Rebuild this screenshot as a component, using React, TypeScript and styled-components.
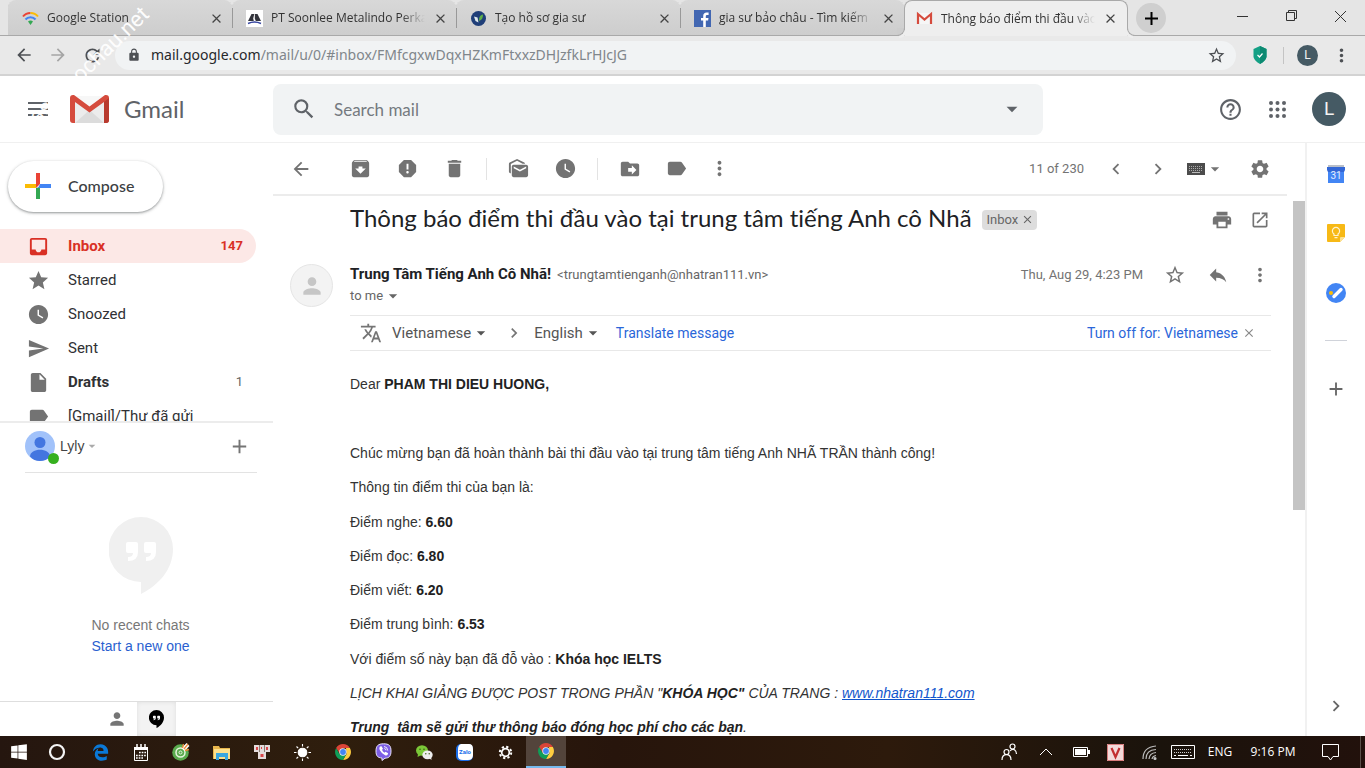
import React from "react";
import styled, { createGlobalStyle, css } from "styled-components";
import {
  MdAdd, MdArchive, MdArrowBack, MdArrowDropDown, MdArrowForward, MdChevronLeft, MdChevronRight,
  MdClose, MdDelete, MdDriveFileMove, MdHelpOutline, MdInbox, MdInsertDriveFile, MdLabel,
  MdLock, MdMarkAsUnread, MdMoreVert, MdOpenInNew, MdPerson, MdPrint, MdRefresh, MdReply, MdReport,
  MdSearch, MdSend, MdSettings, MdStar, MdStarBorder, MdTranslate, MdWatchLater,
} from "react-icons/md";
import { FaEdgeLegacy, FaWindows } from "react-icons/fa6";

const ui = `"Open Sans", "Noto Sans", sans-serif`;
const roboto = `Roboto, "Noto Sans", sans-serif`;
const arial = `"Liberation Sans", Arial, sans-serif`;
const product = `Lato, "Open Sans", sans-serif`;

const GlobalStyle = createGlobalStyle`
  *, *::before, *::after { box-sizing: border-box; }
  body { margin: 0; background: #fff; font-family: ${roboto}; color: #202124; }
  button { border: 0; padding: 0; margin: 0; background: none; color: inherit; font: inherit; cursor: pointer; }
  a { text-decoration: none; }
  p, h1, ul { margin: 0; padding: 0; }
  ul { list-style: none; }
  svg { display: block; flex: none; }
`;

const Screen = styled.div`
  position: relative;
  display: flex;
  flex-direction: column;
  height: 100vh;
  overflow: hidden;
`;

/* ---------- browser ---------- */

const TabStrip = styled.div`
  display: flex;
  flex: none;
  height: 36px;
  padding-left: 8px;
  background: #e5e5e5;
  box-shadow: inset 0 -1px 0 #a9a9a9;
`;

const Tab = styled.div<{ $active?: boolean }>`
  position: relative;
  display: flex;
  flex: 0 1 224px;
  min-width: 0;
  align-items: center;
  gap: 8px;
  padding: 0 8px 0 14px;
  border-radius: 8px 8px 0 0;
  font: 12px/36px ${ui};
  color: #333;
  background: linear-gradient(#d8d8d8, #cdcdcd);
  box-shadow: inset 0 -1px 0 #a9a9a9;
  & + &::before {
    content: "";
    position: absolute;
    left: 0;
    top: 8px;
    width: 1px;
    height: 20px;
    background: #999;
  }
  ${(p) => p.$active && css`
    z-index: 1;
    padding: 0 9px 0 11px;
    background: #eeeeee;
    border: 1px solid #a9a9a9;
    border-bottom: 0;
    box-shadow: none;
    && + &&::before, &&::before, &&::after {
      content: "";
      position: absolute;
      top: auto;
      bottom: 0;
      width: 8px;
      height: 8px;
    }
    &&::before {
      left: -8px;
      background: #cdcdcd;
      border: solid #a9a9a9;
      border-width: 0 1px 1px 0;
      border-radius: 0 0 8px 0;
      box-shadow: 2px 2px 0 #eee;
    }
    &&::after {
      right: -8px;
      background: #e5e5e5;
      border: solid #a9a9a9;
      border-width: 0 0 1px 1px;
      border-radius: 0 0 0 8px;
      box-shadow: -2px 2px 0 #eee;
    }
  `}
`;

const TabTitle = styled.span`
  flex: 1;
  min-width: 0;
  overflow: hidden;
  white-space: nowrap;
  mask-image: linear-gradient(90deg, #000 calc(100% - 24px), transparent);
`;

const TabClose = styled.button`
  display: flex;
  color: #444;
`;

const NewTab = styled.button`
  display: flex;
  align-items: center;
  justify-content: center;
  width: 30px;
  height: 30px;
  margin: 3px 0 0 8px;
  border-radius: 50%;
  background: #cfcfcf;
  color: #000;
`;

const WindowControls = styled.div`
  display: flex;
  margin-left: auto;
`;

const WindowButton = styled.button`
  display: flex;
  align-items: center;
  justify-content: center;
  width: 49px;
  height: 32px;
  color: #333;
`;

const AddressBar = styled.div`
  display: flex;
  flex: none;
  align-items: center;
  height: 40px;
  padding: 0 7px;
  background: #e9e9e9;
  border-bottom: 2px solid #d3d3d3;
`;

const NavButton = styled.button<{ $dim?: boolean }>`
  display: flex;
  align-items: center;
  justify-content: center;
  width: 34px;
  height: 30px;
  color: ${(p) => (p.$dim ? "#a5a5a5" : "#4d5054")};
`;

const Omnibox = styled.div`
  display: flex;
  flex: 1;
  align-items: center;
  height: 29px;
  margin-left: 6px;
  padding: 0 10px 0 12px;
  border-radius: 15px;
  background: #f1f3f4;
  color: #4d5054;
`;

const Url = styled.div`
  flex: 1;
  padding-left: 10px;
  font: 14px/20px "Noto Sans", sans-serif;
  color: #80868b;
  b { font-weight: 400; color: #26282b; }
`;

const Shield = styled.span`
  display: flex;
  padding: 0 16px 0 17px;
`;

const ProfileArea = styled.div`
  display: flex;
  margin-right: 6px;
  padding: 0 0 0 13px;
  align-items: center;
`;

const BarDivider = styled.span`
  width: 1px;
  height: 17px;
  background: #c4c4c4;
`;

const Avatar = styled.button<{ $size: number }>`
  width: ${(p) => p.$size}px;
  height: ${(p) => p.$size}px;
  border-radius: 50%;
  background: #455a64;
  color: #f3f3f3;
  text-align: center;
  font: ${(p) => (p.$size > 30 ? 19 : 12)}px/${(p) => p.$size}px ${roboto};
`;

/* ---------- gmail header ---------- */

const Header = styled.header`
  display: flex;
  flex: none;
  align-items: center;
  height: 67px;
  padding: 0 19px 0 28px;
  border-bottom: 1px solid #f0f0f0;
  color: #5f6368;
`;

const Brand = styled.a`
  display: flex;
  align-items: center;
  gap: 15px;
  width: 203px;
  margin-left: 22px;
  font: 24px/32px ${product};
  color: #5f6368;
`;

const SearchForm = styled.form`
  display: flex;
  align-items: center;
  flex: 0 1 770px;
  height: 51px;
  padding: 0 18px;
  border-radius: 8px;
  background: #f1f3f4;
`;

const SearchInput = styled.input`
  flex: 1;
  min-width: 0;
  padding: 2px 0 0 17px;
  border: 0;
  outline: 0;
  background: none;
  font: 17px/24px ${product};
  color: #5f6368;
  &::placeholder { color: #757a7f; opacity: 1; }
`;

const HeaderActions = styled.div`
  display: flex;
  align-items: center;
  gap: 26px;
  margin-left: auto;
`;

const IconButton = styled.button`
  display: flex;
  align-items: center;
  justify-content: center;
  color: inherit;
`;

/* ---------- layout ---------- */

const Body = styled.div`
  display: flex;
  flex: 1;
  min-height: 0;
`;

const Sidebar = styled.aside`
  display: flex;
  flex: 0 0 273px;
  flex-direction: column;
`;

const Compose = styled.button`
  display: flex;
  flex: none;
  align-items: center;
  align-self: flex-start;
  gap: 16px;
  width: 155px;
  height: 51px;
  margin: 18px 0 17px 8px;
  padding: 0 0 2px 16px;
  border-radius: 26px;
  background: #fff;
  box-shadow: 0 1px 2px rgba(60, 64, 67, 0.4), 0 1px 3px 1px rgba(60, 64, 67, 0.15);
  font: 500 16px/20px ${product};
  color: #3c4043;
`;

const Folders = styled.nav`
  flex: 1;
  min-height: 0;
  overflow: hidden;
`;

const Folder = styled.a<{ $active?: boolean; $bold?: boolean }>`
  display: flex;
  align-items: center;
  height: 34px;
  margin-right: 17px;
  padding: 0 13px 0 27px;
  border-radius: 0 17px 17px 0;
  font: ${(p) => (p.$active || p.$bold ? 700 : 400)} 15px/20px ${roboto};
  color: ${(p) => (p.$active ? "#d93025" : "#303134")};
  background: ${(p) => (p.$active ? "#fce8e6" : "none")};
  svg { color: ${(p) => (p.$active ? "#d93025" : "#737373")}; }
  span { flex: 1; padding-left: 18px; }
  small { font-size: 13px; color: ${(p) => (p.$active ? "#d93025" : "#666")}; font-weight: ${(p) => (p.$active ? 700 : 400)}; }
`;

const Chats = styled.section`
  display: flex;
  flex: none;
  flex-direction: column;
  border-top: 2px solid #ececec;
  font: 14px/20px ${arial};
`;

const ChatUser = styled.div`
  display: flex;
  align-items: center;
  height: 50px;
  margin: 0 16px 0 25px;
  padding: 0 6px 3px 0;
  border-bottom: 1px solid #e3e3e3;
  color: #444;
  > button:last-child { color: #757575; }
`;

const ChatAvatar = styled.span`
  position: relative;
  margin-right: 5px;
  &::after {
    content: "";
    position: absolute;
    right: -4px;
    bottom: -3px;
    width: 11px;
    height: 11px;
    border-radius: 50%;
    background: #36b01f;
  }
`;

const ChatUserName = styled.button`
  display: flex;
  align-items: center;
  margin-right: auto;
  svg { color: #aaa; }
`;

const ChatEmpty = styled.div`
  display: flex;
  flex-direction: column;
  align-items: center;
  padding: 44px 0 44px 8px;
  color: #777;
  line-height: 21px;
  svg { margin-bottom: 20px; }
  a { color: #2a5fd0; }
`;

const ChatTabs = styled.div`
  display: flex;
  justify-content: center;
  height: 35px;
  border-top: 1px solid #dedede;
`;

const ChatTab = styled.button<{ $active?: boolean }>`
  display: flex;
  align-items: center;
  justify-content: center;
  width: 39px;
  color: #757575;
  background: ${(p) => (p.$active ? "#f3f3f3" : "none")};
  box-shadow: ${(p) => (p.$active ? "inset 0 0 4px #ddd" : "none")};
`;

const Main = styled.main`
  display: flex;
  flex: 1;
  flex-direction: column;
  min-width: 0;
`;

const Toolbar = styled.div`
  display: flex;
  flex: none;
  align-items: center;
  height: 53px;
  margin-right: 18px;
  padding-left: 4px;
  border-bottom: 2px solid #ececec;
  color: #737373;
`;

const ToolButton = styled.button<{ $w?: number; $gap?: number }>`
  display: flex;
  align-items: center;
  justify-content: center;
  width: ${(p) => p.$w ?? 47}px;
  height: 34px;
  margin-right: ${(p) => p.$gap ?? 0}px;
`;

const ToolDivider = styled.span`
  width: 1px;
  height: 22px;
  margin: 0 8px;
  background: #e3e3e3;
`;

const Position = styled.span`
  margin-left: auto;
  padding-right: 11px;
  font: 13px/20px ${roboto};
`;

const Scroller = styled.div`
  display: flex;
  flex: 1;
  min-height: 0;
  overflow: hidden;
`;

const Thread = styled.article`
  flex: 1;
  min-width: 0;
  padding: 8px 22px 0 17px;
`;

const ScrollTrack = styled.div`
  width: 12px;
  padding-top: 5px;
`;

const ScrollThumb = styled.div`
  height: 309px;
  background: #c4c4c4;
`;

const SubjectRow = styled.div`
  display: flex;
  align-items: center;
  height: 31px;
  padding-left: 60px;
  color: #5f6368;
`;

const Subject = styled.h1`
  padding-bottom: 3px;
  font: 400 24px/28px ${product};
  font-variant-ligatures: none;
  color: #202124;
  white-space: nowrap;
`;

const Chip = styled.span`
  display: flex;
  align-items: center;
  gap: 3px;
  height: 20px;
  margin-left: 10px;
  padding: 0 3px 0 5px;
  border-radius: 4px;
  background: #ddd;
  font: 13px/20px ${roboto};
  color: #666;
`;

const RowActions = styled.div`
  display: flex;
  align-items: center;
  margin-left: auto;
  color: #737373;
`;

const Sender = styled.header`
  display: flex;
  margin-top: 29px;
  height: 51px;
`;

const SenderPhoto = styled.span`
  display: flex;
  align-items: center;
  justify-content: center;
  width: 43px;
  height: 43px;
  margin-right: 17px;
  border: 1px solid #e5e5e5;
  border-radius: 50%;
  background: #f3f3f3;
  color: #c6c6c6;
`;

const SenderInfo = styled.div`
  flex: 1;
  min-width: 0;
`;

const SenderLine = styled.div`
  display: flex;
  align-items: center;
  height: 21px;
  font: 13px/21px ${roboto};
  color: #666;
  white-space: nowrap;
  strong { margin-right: 6px; font-size: 15px; color: #202124; }
  time { margin-right: 10px; }
`;

const ToMe = styled.button`
  display: flex;
  align-items: center;
  height: 22px;
  font: 13px/22px ${roboto};
  color: #666;
`;

const TranslateBar = styled.div`
  display: flex;
  align-items: center;
  height: 36px;
  margin-left: 60px;
  padding: 0 15px 0 10px;
  border: solid #e8e8e8;
  border-width: 1px 0;
  font: 14px/20px ${roboto};
  color: #555;
  > svg { color: #757575; }
  > button:last-child { color: #888; }
`;

const Language = styled.button`
  display: flex;
  align-items: center;
  margin: 0 13px 0 10px;
  font-size: 15px;
`;

const BlueLink = styled.a<{ $push?: boolean }>`
  margin-left: ${(p) => (p.$push ? "auto" : "0")};
  margin-right: 4px;
  color: #2a66d9;
`;

const Message = styled.div`
  display: flex;
  flex-direction: column;
  gap: 1px;
  padding: 16px 0 0 60px;
  font: 14px/34px ${arial};
  color: #333;
  white-space: nowrap;
  strong { color: #222; }
  a { color: #1155cc; text-decoration: underline; }
`;

const Passage = styled.div`
  p { min-height: 34px; }
`;

const SidePanel = styled.aside`
  display: flex;
  flex: 0 0 60px;
  flex-direction: column;
  align-items: center;
  gap: 37px;
  padding-top: 22px;
  border-left: 2px solid #f1f1f1;
  color: #666;
  hr { width: 22px; margin: 0; border: 0; border-top: 1px solid #d0d3da; }
`;

const PanelApps = styled.div`
  display: flex;
  flex-direction: column;
  align-items: center;
  gap: 41px;
`;

const PanelToggle = styled.button`
  display: flex;
  margin-top: auto;
  margin-bottom: 19px;
`;

/* ---------- task bar ---------- */

const Taskbar = styled.footer`
  display: flex;
  flex: none;
  height: 32px;
  background: linear-gradient(90deg, #25160f, #2f1e0d 25%, #27150c 45%, #2d1a0c 65%, #1a130c 85%, #22110c);
  color: #fff;
`;

const StartButtons = styled.div`
  display: flex;
  width: 80px;
`;

const Apps = styled.div`
  display: grid;
  grid-template-columns: repeat(12, 1fr);
  width: 486px;
`;

const TaskButton = styled.button<{ $active?: boolean }>`
  display: flex;
  align-items: center;
  justify-content: center;
  min-width: 38px;
  background: ${(p) => (p.$active ? "#53443b" : "none")};
  border-bottom: ${(p) => (p.$active ? "2px solid #76b9ed" : "0")};
`;

const Tray = styled.div`
  display: flex;
  align-items: center;
  margin-left: auto;
  border-right: 1px solid #5a4f49;
  margin-right: 4px;
  font: 12px/32px ${ui};
`;

const TrayItem = styled.button<{ $w: number }>`
  display: flex;
  align-items: center;
  justify-content: center;
  width: ${(p) => p.$w}px;
  height: 32px;
`;

const Watermark = styled.span`
  position: absolute;
  left: 20px;
  top: 120px;
  z-index: 5;
  transform: rotate(-44deg);
  transform-origin: left center;
  font: 22px/24px ${roboto};
  color: rgba(255, 255, 255, 0.95);
  pointer-events: none;
`;

/* ---------- drawings ---------- */

const StationIcon = () => (
  <svg width="17" height="17" viewBox="0 0 17 17" fill="none" strokeWidth="2">
    <path d="M1 6.500C3 4 6 3 8.500 3" stroke="#ea4335" />
    <path d="M8.500 3C11 3 14 4 16 6.500" stroke="#fbbc04" />
    <path d="M3.500 9.500C6 6.500 11 6.500 13.500 9.500" stroke="#4285f4" />
    <path d="M6 11.500C7.500 10.200 9.500 10.200 11 11.500L8.500 15z" fill="#34a853" />
  </svg>
);

const SoonleeIcon = () => (
  <svg width="17" height="17" viewBox="0 0 17 17">
    <path fill="#fff" d="M0 0h17v17H0z" />
    <path fill="#33343c" d="M5.500 4h2.800L7.200 8.500l.6 2.500H2zM8.900 4h2.600L15 11H9.800L8.800 8.500z" />
    <path d="M2 13.500Q8.500 10.500 15 13.500" fill="none" stroke="#3746a0" strokeWidth="1.500" />
  </svg>
);

const TutorIcon = () => (
  <svg width="17" height="17" viewBox="0 0 17 17">
    <circle cx="8.500" cy="8.500" r="7.500" fill="#1f3e78" />
    <path fill="#dfe9ee" d="M4 6.500l3.500 1 1 5-3-1.500z" />
    <path fill="#60b048" d="M9 11c0-4 1-6 4-6.500C13 8 12 10 9 11z" />
  </svg>
);

const FacebookIcon = () => (
  <svg width="17" height="17" viewBox="0 0 17 17">
    <path fill="#4267b2" d="M0 0h17v17H0z" />
    <path fill="#fff" d="M9.200 17v-6.500H7V8h2.200V6c0-2.300 1.300-3.600 3.500-3.600.900 0 1.700.1 1.900.1V5h-1.400c-1.100 0-1.400.6-1.400 1.400V8h2.700l-.4 2.500h-2.300V17z" />
  </svg>
);

const MailTabIcon = () => (
  <svg width="17" height="17" viewBox="0 0 17 17">
    <path fill="#f6f6f6" d="M1 3h15v11H1z" />
    <path d="M2 14V4l6.500 5.500L15 4v10" fill="none" stroke="#d54b3d" strokeWidth="2.200" />
  </svg>
);

const GmailLogo = () => (
  <svg width="39" height="28" viewBox="0 0 39 28">
    <path fill="#ececec" d="M2 1h35v27H2z" />
    <path fill="#dcdcdc" d="M5 28L19.500 15 34 28z" />
    <path fill="#f7f7f7" d="M5 1h29L19.500 12z" />
    <path fill="#d54b3d" d="M0 3Q0 0 3 0h1l15.500 11.500L35 0h1q3 0 3 3v22q0 3-3 3h-2V7L19.500 17.500 5 7v21H3q-3 0-3-3z" />
    <path fill="#b83a2e" d="M34 7l5-4v22q0 3-3 3h-2z" />
  </svg>
);

const MenuIcon = () => (
  <svg width="20" height="14" viewBox="0 0 20 14" fill="#5f6368">
    <path d="M0 0h20v2H0zM0 6h20v2H0zM0 12h20v2H0z" />
  </svg>
);

const GridDots = () => (
  <svg width="17" height="17" viewBox="0 0 17 17" fill="currentColor">
    {[2, 8.5, 15].map((y) => [2, 8.5, 15].map((x) => <circle key={`${x}-${y}`} cx={x} cy={y} r="2" />))}
  </svg>
);

const InputToolsIcon = () => (
  <svg width="18" height="12" viewBox="0 0 18 12">
    <path fill="#4c4c4c" d="M0 0h18v12H0z" />
    <path d="M2 3.500h14M2 5.500h14M2 7.500h14" stroke="#aaa" strokeDasharray="1 1" />
    <path d="M5 9.500h8" stroke="#bbb" />
  </svg>
);

const ComposeIcon = () => (
  <svg width="28" height="28" viewBox="0 0 28 28">
    <path fill="#ea4335" d="M12 1h4v11l-4 4z" />
    <path fill="#fbbc04" d="M1 12h11v4H1z" />
    <path fill="#34a853" d="M12 16l4-1v12h-4z" />
    <path fill="#4285f4" d="M16 12h11v4H14z" />
  </svg>
);

const ShieldIcon = () => (
  <svg width="14" height="18" viewBox="0 0 14 18">
    <path fill="#14a085" d="M7 0l6.500 3v8q-1 4-6.500 7Q1.500 15 .5 11V3z" />
    <path fill="#0d8a72" d="M7 0l6.500 3v8q-1 4-6.500 7z" />
    <path d="M4.500 9l2 2 3-3.500" fill="none" stroke="#fff" strokeWidth="1.200" />
  </svg>
);

const UserIcon = () => (
  <svg width="30" height="30" viewBox="0 0 30 30">
    <circle cx="15" cy="15" r="15" fill="#a1c2fa" />
    <circle cx="15" cy="11.500" r="5.500" fill="#4376e0" />
    <path fill="#4376e0" d="M5 25.500c0-9 20-9 20 0q-4 4.500-10 4.500T5 25.500z" />
  </svg>
);

const HangoutsIcon = ({ size, fill, mark }: { size: number; fill: string; mark: string }) => (
  <svg width={size} height={(size * 78) / 64} viewBox="0 0 64 78">
    <path fill={fill} d="M32 0a32 32 0 0 1 32 32c0 20-14 36-32 45V65A32.500 32.500 0 0 1 32 0z" />
    <path fill={mark} d="M19 25h8q2 0 2 2v8q0 9-10 9v-4q5 0 5-4h-5q-2 0-2-2v-7q0-2 2-2zM37 25h8q2 0 2 2v8q0 9-10 9v-4q5 0 5-4h-5q-2 0-2-2v-7q0-2 2-2z" />
  </svg>
);

const CalendarIcon = () => (
  <svg width="18" height="18" viewBox="0 0 18 18">
    <path fill="#b9bfc9" d="M1 0h16v4H1z" />
    <path fill="#4285f4" d="M0 2h18l-1 3v13H1V5z" />
    <path fill="#3367d6" d="M0 2h18v3l-1 2H1L0 5z" />
    <text x="9" y="14" textAnchor="middle" fontSize="10" fontFamily="Roboto, sans-serif" fill="#e8f0fe">31</text>
  </svg>
);

const KeepIcon = () => (
  <svg width="18" height="18" viewBox="0 0 18 18">
    <path fill="#f7b916" d="M1 0h16q1 0 1 1v12l-5 5H1q-1 0-1-1V1q0-1 1-1z" />
    <path fill="#fde293" d="M13 18v-4q0-1 1-1h4z" />
    <path d="M7 11.500V10a3.600 3.600 0 1 1 4 0v1.500zM7.500 13.700h3" fill="none" stroke="#fff3cf" strokeWidth="1.200" />
  </svg>
);

const TasksIcon = () => (
  <svg width="20" height="20" viewBox="0 0 20 20">
    <circle cx="10" cy="10" r="10" fill="#4285f4" />
    <circle cx="5" cy="10" r="2" fill="#fbbc04" />
    <path d="M8 13.500l7-7" stroke="#fff" strokeWidth="3.400" strokeLinecap="round" />
  </svg>
);

const KeyboardIcon = () => (
  <svg width="24" height="17" viewBox="0 0 24 17" fill="none" stroke="#fff">
    <path d="M.500 1.500h23v13H.500z" />
    <path d="M3 5.500h18M3 8.500h18" strokeDasharray="1 1" opacity=".8" />
    <path d="M3 11.500h2M7 11.500h10M19 11.500h2" />
  </svg>
);

const ChromeIcon = () => (
  <svg width="16" height="16" viewBox="0 0 16 16">
    <path fill="#db4437" d="M1.100 4A8 8 0 0 1 14.900 4H8L5 10z" />
    <path fill="#ffcd40" d="M14.900 4A8 8 0 0 1 8 16l3.500-6L11 4z" />
    <path fill="#0f9d58" d="M1.100 4A8 8 0 0 0 8 16l3.400-6H4.500z" />
    <circle cx="8" cy="8" r="3.700" fill="#f1f1f1" />
    <circle cx="8" cy="8" r="2.900" fill="#4285f4" />
  </svg>
);

const CortanaIcon = () => (
  <svg width="18" height="18" viewBox="0 0 18 18"><circle cx="9" cy="9" r="7" fill="none" stroke="#f4f4f4" strokeWidth="2.200" /></svg>
);

const DatesIcon = () => (
  <svg width="16" height="17" viewBox="0 0 16 17" fill="none" stroke="#fff">
    <path d="M1.500 3.500h13v13h-13z" />
    <path d="M1 4.500h14" strokeWidth="3" />
    <path d="M4 0v4M8 0v4M12 0v4" strokeWidth="1.500" />
    <path d="M6 8.500h7M3 11.500h10M3 14h7" strokeWidth="1.700" strokeDasharray="1.700 1" />
  </svg>
);

const CocCocIcon = () => (
  <svg width="18" height="18" viewBox="0 0 18 18">
    <circle cx="8.500" cy="9.500" r="8.300" fill="#5aab4e" />
    <circle cx="8.500" cy="9.500" r="4.500" fill="none" stroke="#e8f5e0" strokeWidth="1.500" />
    <circle cx="8.500" cy="9.500" r="1.500" fill="none" stroke="#e8f5e0" />
    <path d="M11 6.500L16 1.500" stroke="#fff" strokeWidth="4" />
    <path d="M10.500 5l1-4M12 6l4-5M13 7.500l4-1" stroke="#f08a3c" strokeWidth="1.300" />
  </svg>
);

const FolderIcon = () => (
  <svg width="17" height="15" viewBox="0 0 17 15">
    <path fill="#e8b64c" d="M0 1h6l1 2h10v11H0z" />
    <path fill="#fde08c" d="M1 4h16v10H1z" />
    <path fill="#3aa7e0" d="M3 8h12v7h-3v-3H6v3H3z" />
  </svg>
);

const TilesIcon = () => (
  <svg width="16" height="15" viewBox="0 0 16 15">
    <path fill="#e4dcdc" d="M0 0h5v7H0zM5.500 0h5v7h-5zM11 0h5v7h-5zM4 7h8v7H4z" />
    <path fill="#d9474b" d="M2 2h2v3H2zM7 2h1v2H7zM12 2h2v3h-2zM6.500 9h3v3h-3z" />
  </svg>
);

const SunIcon = () => (
  <svg width="17" height="17" viewBox="0 0 17 17" stroke="#fff" strokeWidth="1.100">
    <circle cx="8.500" cy="8.500" r="4.300" fill="#fff" />
    <path d="M8.500 0v2.500M8.500 14.500V17M0 8.500h2.500M14.500 8.500H17M2.500 2.500l1.700 1.700M12.800 12.800l1.700 1.700M2.500 14.500l1.700-1.700M12.800 4.200l1.700-1.700" />
  </svg>
);

const ViberIcon = () => (
  <svg width="17" height="18" viewBox="0 0 17 18">
    <path fill="#7d5fe6" stroke="#e9e4fb" d="M8.500.8C14 .8 16 2.500 16 8s-2 7-6 7.200L7 17.500v-2.400C2.500 14.500 1 13 1 8S3 .8 8.500.8z" />
    <path fill="#fff" d="M5 3.500l1.500-.3L8 5.800l-1 1q.600 2 2.500 2.900l1-1 2.600 1.600-.5 1.500q-1 1.200-2.500.5Q6.500 10.500 4.700 7 3.800 4.600 5 3.500z" />
    <path d="M9 3.500q3.500.3 3.700 4M9.300 5.500q1.500.2 1.700 1.800" fill="none" stroke="#fff" strokeWidth=".9" />
  </svg>
);

const WeChatIcon = () => (
  <svg width="17" height="15" viewBox="0 0 17 15">
    <ellipse cx="6" cy="5.500" rx="6" ry="5.200" fill="#7bc838" />
    <path fill="#7bc838" d="M2 9l-.5 3 3-1.500z" />
    <ellipse cx="11.500" cy="9.800" rx="5.200" ry="4.400" fill="#eee" />
    <path fill="#eee" d="M13 13l2.500 2-.3-3z" />
    <g fill="#38590f"><circle cx="4" cy="4.300" r=".8" /><circle cx="8" cy="4.300" r=".8" /><circle cx="9.800" cy="8.700" r=".7" /><circle cx="13.200" cy="8.700" r=".7" /></g>
  </svg>
);

const ZaloIcon = () => (
  <svg width="17" height="17" viewBox="0 0 17 17">
    <rect width="17" height="17" rx="5" fill="#1a6dea" />
    <path fill="#fff" d="M5 0h8q4 0 4 5v6q0 5-5 5H7q-5 0-5-4V5q0-4 3-5z" />
    <text x="9" y="10" textAnchor="middle" fontSize="6" fontWeight="700" fontFamily="Roboto, sans-serif" fill="#1a6dea">Zalo</text>
  </svg>
);

const GearIcon = () => (
  <svg width="15" height="15" viewBox="0 0 15 15" fill="none" stroke="#fff">
    <circle cx="7.500" cy="7.500" r="3.800" strokeWidth="1.700" />
    <circle cx="7.500" cy="7.500" r="5.700" strokeWidth="2" strokeDasharray="2.240 2.237" />
  </svg>
);

const PeopleIcon = () => (
  <svg width="18" height="18" viewBox="0 0 18 18" fill="none" stroke="#fff" strokeWidth="1.200">
    <circle cx="12.500" cy="3.500" r="2.500" /><path d="M10 8q2-2.500 4.500-1.300 2 1.500 2 4.300" />
    <circle cx="6.500" cy="9" r="2.500" /><path d="M2 17q0-5.300 4.500-5.300T11 17" />
  </svg>
);

const VietKeyIcon = () => (
  <svg width="17" height="17" viewBox="0 0 17 17">
    <path fill="#f3dada" d="M0 0h17v17H0z" />
    <path d="M4.500 4l4 9 4-9" fill="none" stroke="#c22e30" strokeWidth="2.200" />
    <path d="M.500.500h16v16H.500z" fill="none" stroke="#d87d7d" />
  </svg>
);

const WifiIcon = () => (
  <svg width="15" height="15" viewBox="0 0 15 15" fill="none" stroke="#bbb" strokeWidth="1.200">
    <path d="M1 14Q1 2 14 1M4 14Q4 5 14 4.500M7 14Q7.500 8 14 7.500M10 14q.500-3 4-3.500" /><circle cx="13" cy="13.500" r="1" fill="#fff" />
  </svg>
);

const BatteryIcon = () => (
  <svg width="17" height="10" viewBox="0 0 17 10"><path d="M.500.500h14v9H.500z" fill="none" stroke="#fff" /><path fill="#fff" d="M2 2h11v6H2zM15 3h2v4h-2z" /></svg>
);

const NoticeIcon = () => (
  <svg width="17" height="17" viewBox="0 0 17 17" fill="none" stroke="#fff"><path d="M.500.500h16v12H11L8.500 16 6 12.500H.500z" /></svg>
);

const tabs = [
  { title: "Google Station", icon: <StationIcon /> },
  { title: "PT Soonlee Metalindo Perkasa", icon: <SoonleeIcon /> },
  { title: "Tạo hồ sơ gia sư", icon: <TutorIcon /> },
  { title: "gia sư bảo châu - Tìm kiếm", icon: <FacebookIcon /> },
  { title: "Thông báo điểm thi đầu vào tại", icon: <MailTabIcon />, active: true },
];

const folders = [
  { name: "Inbox", Icon: MdInbox, count: "147", active: true },
  { name: "Starred", Icon: MdStar },
  { name: "Snoozed", Icon: MdWatchLater },
  { name: "Sent", Icon: MdSend },
  { name: "Drafts", Icon: MdInsertDriveFile, count: "1", bold: true },
  { name: "[Gmail]/Thư đã gửi", Icon: MdLabel },
];

const scores = [
  ["Điểm nghe:", "6.60"],
  ["Điểm đọc:", "6.80"],
  ["Điểm viết:", "6.20"],
  ["Điểm trung bình:", "6.53"],
];

const apps: [string, React.ReactNode][] = [
  ["Edge", <FaEdgeLegacy size={17} color="#0a79d8" />],
  ["Calendar", <DatesIcon />],
  ["Cốc Cốc", <CocCocIcon />],
  ["File Explorer", <FolderIcon />],
  ["Mahjong", <TilesIcon />],
  ["Brightness", <SunIcon />],
  ["Chrome", <ChromeIcon />],
  ["Viber", <ViberIcon />],
  ["WeChat", <WeChatIcon />],
  ["Zalo", <ZaloIcon />],
  ["Settings", <GearIcon />],
  ["Chrome window", <ChromeIcon />],
];

export default function App() {
  return (
    <Screen>
      <GlobalStyle />
      <TabStrip>
        {tabs.map((t) => (
          <Tab key={t.title} $active={t.active}>
            {t.icon}
            <TabTitle>{t.title}</TabTitle>
            <TabClose aria-label="Close tab"><MdClose size={15} /></TabClose>
          </Tab>
        ))}
        <NewTab aria-label="New tab">
          <svg width="13" height="13" viewBox="0 0 13 13" stroke="currentColor" strokeWidth="2"><path d="M6.500 0v13M0 6.500h13" /></svg>
        </NewTab>
        <WindowControls>
          <WindowButton aria-label="Minimize">
            <svg width="11" height="11" viewBox="0 0 11 11" stroke="currentColor"><path d="M0 5.500h11" /></svg>
          </WindowButton>
          <WindowButton aria-label="Restore">
            <svg width="12" height="12" viewBox="0 0 12 12" fill="none" stroke="currentColor"><path d="M.500 2.500h8v8h-8zM2.500 2.500v-2h8v8h-2" /></svg>
          </WindowButton>
          <WindowButton aria-label="Close window">
            <svg width="11" height="11" viewBox="0 0 11 11" stroke="currentColor"><path d="M0 0l11 11M11 0L0 11" /></svg>
          </WindowButton>
        </WindowControls>
      </TabStrip>

      <AddressBar>
        <NavButton aria-label="Back"><MdArrowBack size={20} /></NavButton>
        <NavButton aria-label="Forward" $dim><MdArrowForward size={20} /></NavButton>
        <NavButton aria-label="Reload"><MdRefresh size={21} /></NavButton>
        <Omnibox>
          <MdLock size={14} />
          <Url><b>mail.google.com</b>/mail/u/0/#inbox/FMfcgxwDqxHZKmFtxxzDHJzfkLrHJcJG</Url>
          <IconButton aria-label="Bookmark"><MdStarBorder size={19} /></IconButton>
        </Omnibox>
        <Shield><ShieldIcon /></Shield>
        <BarDivider />
        <ProfileArea><Avatar $size={21} aria-label="Profile">L</Avatar></ProfileArea>
        <NavButton aria-label="Browser menu"><MdMoreVert size={21} /></NavButton>
      </AddressBar>

      <Header>
        <IconButton aria-label="Main menu"><MenuIcon /></IconButton>
        <Brand href="#"><GmailLogo />Gmail</Brand>
        <SearchForm role="search">
          <IconButton type="button" aria-label="Search"><MdSearch size={26} /></IconButton>
          <SearchInput placeholder="Search mail" aria-label="Search mail" />
          <IconButton type="button" aria-label="Search options"><MdArrowDropDown size={26} /></IconButton>
        </SearchForm>
        <HeaderActions>
          <IconButton aria-label="Support"><MdHelpOutline size={25} /></IconButton>
          <IconButton aria-label="Google apps"><GridDots /></IconButton>
          <Avatar $size={34} aria-label="Account">L</Avatar>
        </HeaderActions>
      </Header>

      <Body>
        <Sidebar>
          <Compose><ComposeIcon />Compose</Compose>
          <Folders>
            {folders.map(({ name, Icon, count, active, bold }) => (
              <Folder key={name} href="#" $active={active} $bold={bold}>
                <Icon size={23} />
                <span>{name}</span>
                {count && <small>{count}</small>}
              </Folder>
            ))}
          </Folders>
          <Chats>
            <ChatUser>
              <ChatAvatar><UserIcon /></ChatAvatar>
              <ChatUserName>Lyly<MdArrowDropDown size={16} /></ChatUserName>
              <IconButton aria-label="New conversation"><MdAdd size={23} /></IconButton>
            </ChatUser>
            <ChatEmpty>
              <HangoutsIcon size={64} fill="#f0f0f0" mark="#fff" />
              <p>No recent chats</p>
              <a href="#">Start a new one</a>
            </ChatEmpty>
            <ChatTabs>
              <ChatTab aria-label="Contacts"><MdPerson size={20} /></ChatTab>
              <ChatTab aria-label="Hangouts" $active><HangoutsIcon size={15} fill="#000" mark="#fff" /></ChatTab>
            </ChatTabs>
          </Chats>
        </Sidebar>

        <Main>
          <Toolbar>
            <ToolButton aria-label="Back to inbox" $gap={13}><MdArrowBack size={22} /></ToolButton>
            <ToolButton aria-label="Archive"><MdArchive size={23} /></ToolButton>
            <ToolButton aria-label="Report spam"><MdReport size={23} /></ToolButton>
            <ToolButton aria-label="Delete"><MdDelete size={23} /></ToolButton>
            <ToolDivider />
            <ToolButton aria-label="Mark as unread"><MdMarkAsUnread size={23} /></ToolButton>
            <ToolButton aria-label="Snooze"><MdWatchLater size={23} /></ToolButton>
            <ToolDivider />
            <ToolButton aria-label="Move to"><MdDriveFileMove size={22} /></ToolButton>
            <ToolButton aria-label="Labels"><MdLabel size={23} /></ToolButton>
            <ToolButton aria-label="More" $w={38}><MdMoreVert size={23} /></ToolButton>
            <Position>11 of 230</Position>
            <ToolButton aria-label="Newer" $w={42}><MdChevronLeft size={22} /></ToolButton>
            <ToolButton aria-label="Older" $w={42}><MdChevronRight size={22} /></ToolButton>
            <ToolButton aria-label="Input tools" $w={53}><InputToolsIcon /><MdArrowDropDown size={20} /></ToolButton>
            <ToolButton aria-label="Settings" $w={55}><MdSettings size={22} /></ToolButton>
          </Toolbar>
          <Scroller>
            <Thread>
              <SubjectRow>
                <Subject>Thông báo điểm thi đầu vào tại trung tâm tiếng Anh cô Nhã</Subject>
                <Chip>Inbox<IconButton aria-label="Remove label"><MdClose size={13} /></IconButton></Chip>
                <RowActions>
                  <ToolButton aria-label="Print" $w={39} $gap={7}><MdPrint size={22} /></ToolButton>
                  <ToolButton aria-label="Open in new window" $w={23}><MdOpenInNew size={20} /></ToolButton>
                </RowActions>
              </SubjectRow>
              <Sender>
                <SenderPhoto><MdPerson size={26} /></SenderPhoto>
                <SenderInfo>
                  <SenderLine>
                    <strong>Trung Tâm Tiếng Anh Cô Nhã!</strong>
                    &lt;trungtamtienganh@nhatran111.vn&gt;
                    <RowActions>
                      <time>Thu, Aug 29, 4:23 PM</time>
                      <ToolButton aria-label="Star" $w={43}><MdStarBorder size={22} /></ToolButton>
                      <ToolButton aria-label="Reply" $w={43} $gap={9}><MdReply size={22} /></ToolButton>
                      <ToolButton aria-label="More" $w={23}><MdMoreVert size={22} /></ToolButton>
                    </RowActions>
                  </SenderLine>
                  <ToMe>to me<MdArrowDropDown size={20} /></ToMe>
                </SenderInfo>
              </Sender>
              <TranslateBar>
                <MdTranslate size={22} />
                <Language>Vietnamese<MdArrowDropDown size={20} /></Language>
                <MdChevronRight size={20} />
                <Language>English<MdArrowDropDown size={20} /></Language>
                <BlueLink href="#">Translate message</BlueLink>
                <BlueLink href="#" $push>Turn off for: Vietnamese</BlueLink>
                <IconButton aria-label="Dismiss"><MdClose size={14} /></IconButton>
              </TranslateBar>
              <Message>
                <Passage>
                  <p>Dear <strong>PHAM THI DIEU HUONG,</strong></p>
                  <p />
                </Passage>
                <Passage>
                  <p>Chúc mừng bạn đã hoàn thành bài thi đầu vào tại trung tâm tiếng Anh NHÃ TRẦN thành công!</p>
                  <p>Thông tin điểm thi của bạn là:</p>
                </Passage>
                <Passage>
                  {scores.map(([label, value]) => (
                    <p key={label}>{label} <strong>{value}</strong></p>
                  ))}
                </Passage>
                <Passage>
                  <p>Với điểm số này bạn đã đỗ vào : <strong>Khóa học IELTS</strong></p>
                  <p><em>LỊCH KHAI GIẢNG ĐƯỢC POST TRONG PHẦN "<strong>KHÓA HỌC"</strong> CỦA TRANG : <a href="#">www.nhatran111.com</a></em></p>
                  <p><em><strong>Trung&nbsp; tâm sẽ gửi thư thông báo đóng học phí cho các bạn</strong>.</em></p>
                </Passage>
              </Message>
            </Thread>
            <ScrollTrack><ScrollThumb /></ScrollTrack>
          </Scroller>
        </Main>

        <SidePanel>
          <PanelApps>
            <IconButton aria-label="Calendar"><CalendarIcon /></IconButton>
            <IconButton aria-label="Keep"><KeepIcon /></IconButton>
            <IconButton aria-label="Tasks"><TasksIcon /></IconButton>
          </PanelApps>
          <hr />
          <IconButton aria-label="Get add-ons"><MdAdd size={22} /></IconButton>
          <PanelToggle aria-label="Hide side panel"><MdChevronRight size={22} /></PanelToggle>
        </SidePanel>
      </Body>

      <Taskbar>
        <StartButtons>
          <TaskButton aria-label="Start"><FaWindows size={18} /></TaskButton>
          <TaskButton aria-label="Cortana"><CortanaIcon /></TaskButton>
        </StartButtons>
        <Apps>
          {apps.map(([name, icon], i) => (
            <TaskButton key={name} aria-label={name} $active={i === 11}>{icon}</TaskButton>
          ))}
        </Apps>
        <Tray>
          <TrayItem $w={38} aria-label="People"><PeopleIcon /></TrayItem>
          <TrayItem $w={36} aria-label="Hidden icons">
            <svg width="14" height="8" viewBox="0 0 14 8" fill="none" stroke="#fff"><path d="M1 7l6-6 6 6" /></svg>
          </TrayItem>
          <TrayItem $w={34} aria-label="Battery"><BatteryIcon /></TrayItem>
          <TrayItem $w={34} aria-label="Vietnamese keyboard"><VietKeyIcon /></TrayItem>
          <TrayItem $w={34} aria-label="Network"><WifiIcon /></TrayItem>
          <TrayItem $w={34} aria-label="Keyboard"><KeyboardIcon /></TrayItem>
          <TrayItem $w={40}>ENG</TrayItem>
          <TrayItem $w={66}>9:16 PM</TrayItem>
          <TrayItem $w={48} aria-label="Notifications"><NoticeIcon /></TrayItem>
          <TrayItem $w={6} aria-label="Show desktop" />
        </Tray>
      </Taskbar>
      <Watermark>giasubaochau.net</Watermark>
    </Screen>
  );
}
